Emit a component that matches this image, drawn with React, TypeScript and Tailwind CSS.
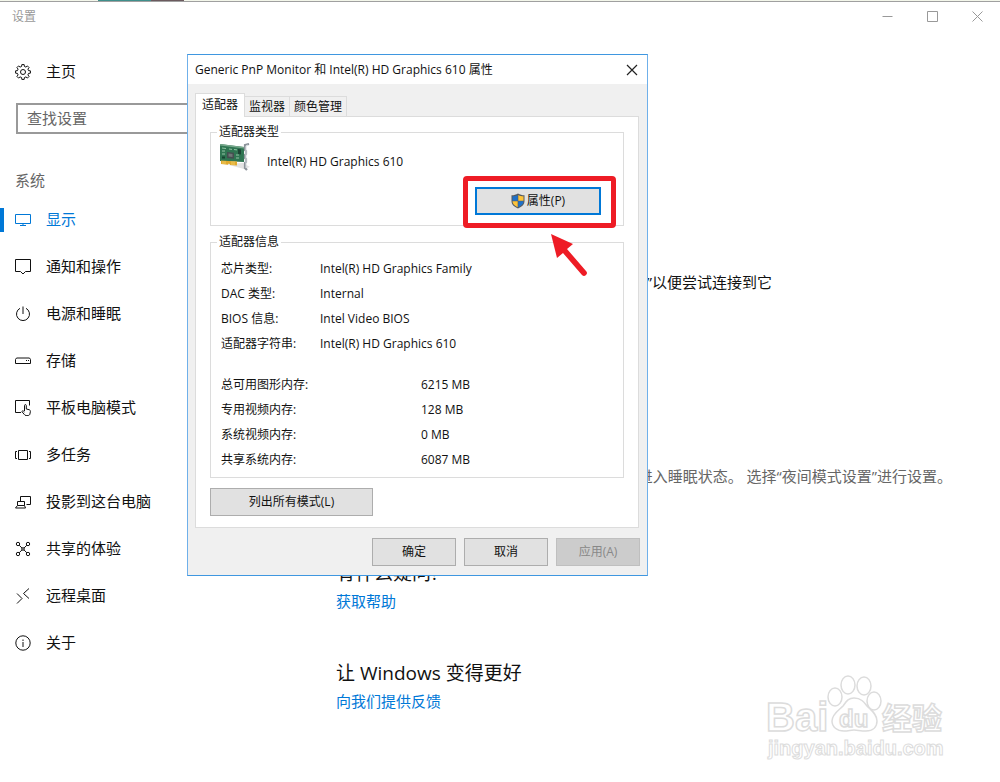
import { useState, type ReactNode } from 'react';

const GEAR_TEETH = 8;

// Outline of a cog: each tooth is two points out and two points in
const gearPath = () => {
  const points: string[] = [];
  const step = (Math.PI * 2) / GEAR_TEETH;
  const add = (radius: number, angle: number) =>
    points.push(`${(8 + radius * Math.cos(angle)).toFixed(2)} ${(8 + radius * Math.sin(angle)).toFixed(2)}`);

  for (let i = 0; i < GEAR_TEETH; i++) {
    const a = i * step - Math.PI / 2;
    add(5.7, a - step * 0.32);
    add(7.5, a - step * 0.2);
    add(7.5, a + step * 0.2);
    add(5.7, a + step * 0.32);
  }
  return `M${points.join('L')}Z`;
};

const Icon = ({ children }: { children: ReactNode }) => (
  <svg
    viewBox="0 0 16 16"
    className="w-4 h-4 shrink-0"
    fill="none"
    stroke="currentColor"
    strokeWidth="1"
    aria-hidden="true"
  >
    {children}
  </svg>
);

const navItems = [
  {
    label: '显示',
    icon: <path d="M.5 2.500h15v9H.5zM8 11.500v2M5 13.500h6" />,
  },
  {
    label: '通知和操作',
    icon: <path d="M.5 .5h15v12h-5L8 15l-2.500-2.500h-5z" />,
  },
  {
    label: '电源和睡眠',
    icon: <path d="M8 .5V8M5 2.300a6.500 6.500 0 1 0 6 0" />,
  },
  {
    label: '存储',
    icon: <path d="M.5 10.500v-4l1-1.500h13l1 1.500v4zM11 7.500h1M13 7.500h1" />,
  },
  {
    label: '平板电脑模式',
    icon: (
      <>
        <path d="M6 12.500H.5V.5h14v5M1 12.500h5" />
        <path d="M9.500 11V5.500c0-1.200 1.800-1.200 1.800 0V9l2.800.7c1 .3 1.400.9 1.300 1.800l-.5 2.500c-.3 1.200-1 1.500-2 1.500h-1.700c-1 0-1.500-.4-2-1.200L6.800 11.500c.6-.9 1.700-.7 2.700.5" />
      </>
    ),
  },
  {
    label: '多任务',
    icon: <path d="M3.500 3.500h9v9h-9zM2 4.500H.5v7H2M14 4.500h1.500v7H14" />,
  },
  {
    label: '投影到这台电脑',
    icon: <path d="M5.500 7V2.500h10v8h-4M2.500 7.500h7v4h-7zM2.500 11.500l-2 2.500h10l-1-2.500" />,
  },
  {
    label: '共享的体验',
    icon: (
      <>
        <circle cx="3" cy="3" r="1.700" />
        <circle cx="13" cy="3" r="1.700" />
        <circle cx="3" cy="13" r="1.700" />
        <circle cx="13" cy="13" r="1.700" />
        <circle cx="8" cy="8" r="1.300" />
        <path d="M4.200 4.200l2.900 3M11.800 4.200l-2.900 3M4.200 11.800l2.900-3M11.800 11.800l-2.900-3" />
      </>
    ),
  },
  {
    label: '远程桌面',
    icon: <path d="M2 5.500l5 5L2 15.500M14 .5l-5.500 5 5.500 5" />,
  },
  {
    label: '关于',
    icon: (
      <>
        <circle cx="8" cy="8" r="7.200" />
        <path d="M8 7v5M8 4.500V6" />
      </>
    ),
  },
];

const tabs = ['适配器', '监视器', '颜色管理'];

const adapterInfo = [
  ['芯片类型:', 'Intel(R) HD Graphics Family'],
  ['DAC 类型:', 'Internal'],
  ['BIOS 信息:', 'Intel Video BIOS'],
  ['适配器字符串:', 'Intel(R) HD Graphics 610'],
];

const memoryInfo = [
  ['总可用图形内存:', '6215 MB'],
  ['专用视频内存:', '128 MB'],
  ['系统视频内存:', '0 MB'],
  ['共享系统内存:', '6087 MB'],
];

const AdapterCard = () => (
  <svg viewBox="0 0 32 28" className="w-8 h-7 shrink-0" aria-hidden="true">
    <path d="M6 21l18-1 7 4-6 2z" fill="#e3e3e3" />
    <path d="M1 1l24 3v15L1 18z" fill="#2f7552" />
    <path d="M1 1l24 3v1.500L1 2.500z" fill="#79a98d" />
    <path d="M2 17.500l16 1v4l-7-.5v-1l-2-.2v1L2 21z" fill="#e0a92c" />
    <path d="M4 18v3M6 18v3M13 18.500v3.500M15 18.500v3.500" stroke="#f7dc7b" strokeWidth=".7" />
    <path d="M8 9l7 .7v6L8 15z" fill="#454e50" />
    <path d="M9.500 10.500l4 .4v3l-4-.4z" fill="#6f7676" />
    <path d="M3 5l4 .5M3 8h3M3 11h3M10 6l3 .4M15 6.500l3 .4M17 12h3M17 15h3" stroke="#93c4a4" strokeWidth="1" />
    <path d="M19 6l3 .4v5l-3-.4z" fill="#1d4434" />
    <path d="M3 13.500h3v2H3z" fill="#174330" />
    <path d="M30 1l-4 1v5l1 1v3l-1 1v3l1 1v3l-1 1v5l2 2" fill="none" stroke="#8b9299" strokeWidth="2.200" />
    <path d="M29 2l-2 1v22" fill="none" stroke="#dfe4e8" strokeWidth="1" />
  </svg>
);

const Shield = () => (
  <svg viewBox="0 0 14 16" className="w-3.5 h-4 shrink-0" aria-hidden="true">
    <path d="M7 .5C5 1.800 3 2.200.5 2.300V8c0 3.500 2.500 5.800 6.500 7.500 4-1.700 6.500-4 6.500-7.500V2.300C11 2.200 9 1.800 7 .5z" fill="#555b60" />
    <path d="M6.700 1.900C5 2.900 3.500 3.200 1.500 3.300V7.700h5.200z" fill="#1f71c9" />
    <path d="M7.300 1.900c1.700 1 3.200 1.300 5.200 1.400v4.400H7.300z" fill="#fdc33a" />
    <path d="M1.500 8.200h5.200v6C3.600 12.800 1.600 11 1.500 8.200z" fill="#fdc33a" />
    <path d="M7.300 8.200h5.200c-.1 2.800-2.100 4.600-5.200 6z" fill="#1f71c9" />
  </svg>
);

const Watermark = () => (
  <svg
    viewBox="0 0 190 94"
    className="absolute right-[48px] bottom-[16px] w-[190px] h-[94px] pointer-events-none"
    fill="#fff"
    stroke="#dcdcdc"
    strokeWidth="1.500"
    aria-hidden="true"
  >
    <text x="4" y="59" className="font-['Liberation_Sans'] font-bold text-[40px]">Bai</text>
    <ellipse cx="73" cy="25" rx="7" ry="9" />
    <ellipse cx="86" cy="13" rx="7" ry="9" />
    <ellipse cx="102" cy="14" rx="7" ry="9" />
    <ellipse cx="112" cy="29" rx="7" ry="9" />
    <path d="M92 26c-6 0-8 4-11 8-4 4-11 8-11 15 0 6 5 10 12 10 4 0 7-1 10-1s7 1 12 1c7 0 11-4 11-10 0-7-6-11-10-15-3-4-6-8-13-8z" />
    <text x="77" y="55" className="font-['Liberation_Sans'] font-bold text-[24px]">du</text>
    <text x="120" y="57" className="font-['Noto_Sans_CJK_SC'] font-bold text-[30px]">经验</text>
    <text x="6" y="83" strokeWidth="1" className="font-['Liberation_Sans'] font-bold text-[20px]">jingyan.baidu.com</text>
  </svg>
);

const DialogButton = ({ children, disabled }: { children: ReactNode; disabled?: boolean }) => (
  <button
    disabled={disabled}
    className="w-[84px] h-7 border border-[#adadad] bg-[#e1e1e1] disabled:border-[#bfbfbf] disabled:bg-[#cccccc] disabled:text-[#888888]"
  >
    {children}
  </button>
);

const InfoRows = ({ rows, wide }: { rows: string[][]; wide?: boolean }) => (
  <dl>
    {rows.map(([label, value]) => (
      <div key={label} className="flex leading-[25px]">
        <dt className={wide ? 'w-[200px]' : 'w-[99px]'}>{label}</dt>
        <dd>{value}</dd>
      </div>
    ))}
  </dl>
);

const AdapterDialog = () => {
  const [activeTab, setActiveTab] = useState(0);

  return (
    <div
      role="dialog"
      aria-labelledby="dialog-title"
      className="absolute left-[187px] top-[54px] w-[461px] border border-x-[#6fb0ea] border-y-[#3f97e0] bg-[#f0f0f0] text-xs text-[#111]"
    >
      <div className="flex items-center justify-between h-[29px] px-[7px] bg-white">
        <h1 id="dialog-title">Generic PnP Monitor 和 Intel(R) HD Graphics 610 属性</h1>
        <button aria-label="关闭" className="flex items-center justify-center w-4 h-4">
          <svg viewBox="0 0 12 12" className="w-3 h-3" stroke="#222" strokeWidth="1.200">
            <path d="M1 1l10 10M11 1L1 11" />
          </svg>
        </button>
      </div>

      <div className="pl-[7px] pr-2 pt-[9px]">
        {/* Tabs */}
        <div role="tablist" className="flex items-end">
          {tabs.map((tab, i) => (
            <button
              key={tab}
              role="tab"
              aria-selected={i === activeTab}
              onClick={() => setActiveTab(i)}
              className={
                i === activeTab
                  ? 'relative -mb-px h-6 px-1.5 pb-0.5 border border-b-0 border-[#dcdcdc] bg-white'
                  : 'h-5 px-1 border border-l-0 border-b-0 border-[#dcdcdc] bg-[#f0f0f0]'
              }
            >
              {tab}
            </button>
          ))}
        </div>

        <div role="tabpanel" className="px-[14px] pt-[5px] pb-[11px] border border-[#dcdcdc] bg-white">
          <fieldset className="h-[104px] border border-[#dcdcdc]">
            <legend className="ml-1.5 px-0.5 leading-5">适配器类型</legend>
            <div className="flex items-start gap-4 pl-2 pt-px">
              <AdapterCard />
              <span className="pt-[9px] leading-5">Intel(R) HD Graphics 610</span>
            </div>
            <div className="flex justify-end mt-[15px] mr-[22px]">
              <div className="relative">
                <button className="flex items-center justify-center gap-0.5 w-[126px] h-7 border-2 border-[#0078d7] bg-[#e1e1e1]">
                  <Shield />
                  属性(P)
                </button>
                {/* Highlight frame and pointer */}
                <div className="absolute -left-3 -right-[15px] -top-[11px] -bottom-[13px] border-[5px] border-[#ee1c25] rounded-sm pointer-events-none" />
                <svg viewBox="0 0 38 46" className="absolute left-[75px] top-[46px] w-[38px] h-[46px] pointer-events-none">
                  <path d="M1 1l22 10-6 5 19 22a2.500 2.500 0 0 1-4 4L13 20l-6 5z" fill="#ee1c25" />
                </svg>
              </div>
            </div>
          </fieldset>

          <fieldset className="h-[246px] mt-1.5 border border-[#dcdcdc]">
            <legend className="ml-1.5 px-0.5 leading-5">适配器信息</legend>
            <div className="flex flex-col gap-4 pl-2.5 pt-1">
              <InfoRows rows={adapterInfo} />
              <InfoRows rows={memoryInfo} wide />
            </div>
          </fieldset>

          <button className="block w-[163px] h-7 mt-2.5 border border-[#adadad] bg-[#e1e1e1]">
            列出所有模式(L)
          </button>
        </div>
      </div>

      <div className="flex justify-end gap-2 pt-2.5 pb-[9px] pr-[7px]">
        <DialogButton>确定</DialogButton>
        <DialogButton>取消</DialogButton>
        <DialogButton disabled>应用(A)</DialogButton>
      </div>
    </div>
  );
};

const Sidebar = () => {
  const [active, setActive] = useState('显示');

  return (
    <nav className="w-80 shrink-0 pt-[18px]">
      <a href="#home" className="flex items-center gap-[15px] h-[47px] pl-[15px]">
        <Icon>
          <path d={gearPath()} />
          <circle cx="8" cy="8" r="2.500" />
        </Icon>
        主页
      </a>

      <div className="px-4 pt-2">
        <input
          type="search"
          aria-label="查找设置"
          placeholder="查找设置"
          className="block w-full h-[31px] px-[9px] pb-0.5 border-2 border-[#999999] outline-none placeholder:text-[#666666]"
        />
      </div>

      <h2 className="pl-[15px] pt-[35px] pb-[5px] leading-[22px] text-[#666666]">系统</h2>

      <ul>
        {navItems.map(({ label, icon }) => (
          <li key={label}>
            <a
              href="#settings"
              onClick={() => setActive(label)}
              className={`relative flex items-center gap-[15px] h-[47px] pl-[15px] ${label === active ? 'text-[#0078d7]' : ''}`}
            >
              {label === active && <span className="absolute left-0 w-1 h-6 bg-[#0078d7]" />}
              <Icon>{icon}</Icon>
              {label}
            </a>
          </li>
        ))}
      </ul>
    </nav>
  );
};

const App = () => {
  return (
    <div className="relative min-h-screen overflow-hidden bg-white font-['Open_Sans','Noto_Sans_CJK_SC',sans-serif] text-[15px] text-[#111]">
      {/* Edge of the window behind */}
      <div className="flex h-px bg-[#f3f6ea]">
        <div className="w-[98px]" />
        <div className="w-[53px] bg-[#3f8f8b]" />
        <div className="w-[33px] bg-[#6b5a5e]" />
      </div>

      <header className="flex items-center justify-between h-[29px] border-t border-[#a0a0a0] text-xs text-[#999999]">
        <span className="pl-3 pt-0.5">设置</span>
        <div className="flex">
          <button aria-label="最小化" className="flex items-center justify-center w-[45px] h-7">
            <svg viewBox="0 0 11 11" className="w-[11px] h-[11px]" fill="none" stroke="currentColor">
              <path d="M.5 5.500h10" />
            </svg>
          </button>
          <button aria-label="最大化" className="flex items-center justify-center w-[45px] h-7">
            <svg viewBox="0 0 11 11" className="w-[11px] h-[11px]" fill="none" stroke="currentColor">
              <path d="M.5.5h10v10H.5z" />
            </svg>
          </button>
          <button aria-label="关闭" className="flex items-center justify-center w-[45px] h-7">
            <svg viewBox="0 0 11 11" className="w-[11px] h-[11px]" fill="none" stroke="currentColor">
              <path d="M.5.5l10 10M10.500.5l-10 10" />
            </svg>
          </button>
        </div>
      </header>

      <div className="flex">
        <Sidebar />

        <main className="flex-1 min-w-0 pl-4 pt-[242px] leading-5">
          <p className="w-[436px] text-right">检测”以便尝试连接到它</p>
          <p className="w-[616px] mt-[174px] text-right text-[#666666]">
            进入睡眠状态。 选择“夜间模式设置”进行设置。
          </p>

          <section className="mt-[73px]">
            <h2 className="text-[19px] leading-7">有什么疑问?</h2>
            <a href="#help" className="block mt-1 text-[#0078d7]">获取帮助</a>
          </section>

          <section className="mt-12">
            <h2 className="text-[19px] leading-7">让 Windows 变得更好</h2>
            <a href="#feedback" className="block mt-1 text-[#0078d7]">向我们提供反馈</a>
          </section>
        </main>
      </div>

      <Watermark />
      <AdapterDialog />
    </div>
  );
};

export default App;
